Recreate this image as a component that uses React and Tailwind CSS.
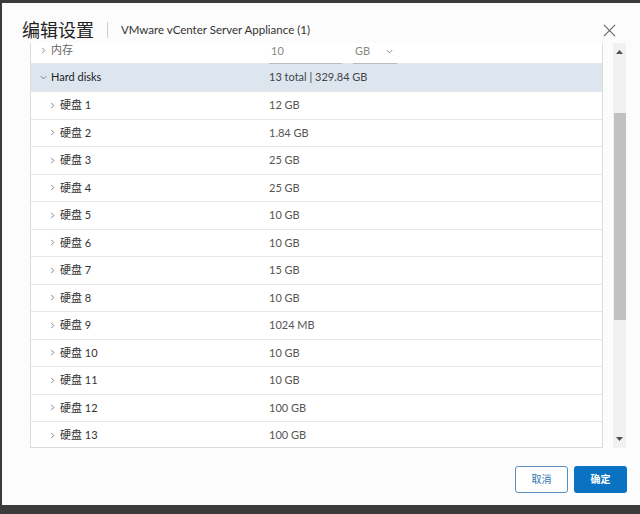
import React from "react";

const disks = [
  ["硬盘 1", "12 GB"],
  ["硬盘 2", "1.84 GB"],
  ["硬盘 3", "25 GB"],
  ["硬盘 4", "25 GB"],
  ["硬盘 5", "10 GB"],
  ["硬盘 6", "10 GB"],
  ["硬盘 7", "15 GB"],
  ["硬盘 8", "10 GB"],
  ["硬盘 9", "1024 MB"],
  ["硬盘 10", "10 GB"],
  ["硬盘 11", "10 GB"],
  ["硬盘 12", "100 GB"],
  ["硬盘 13", "100 GB"],
];

const font = { fontFamily: '"Lato", "Noto Sans CJK SC", sans-serif' };

function Chevron({ down }) {
  return (
    <svg width="7" height="7" viewBox="0 0 8 8" className="text-gray-500">
      {down ? (
        <path d="M1 2.5 L4 5.5 L7 2.5" fill="none" stroke="currentColor" strokeWidth="1" />
      ) : (
        <path d="M2.5 1 L5.5 4 L2.5 7" fill="none" stroke="currentColor" strokeWidth="1" />
      )}
    </svg>
  );
}

function Row({ label, value }) {
  return (
    <div className="flex items-center h-[27.5px] border-b border-[#e6e6e6] bg-white">
      <div className="w-[238px] flex items-center pl-[18px] gap-[4px] text-[11px] text-[#333]">
        <Chevron />
        <span>{label}</span>
      </div>
      <div className="text-[11px] text-[#555]">{value}</div>
    </div>
  );
}

export default function App() {
  return (
    <div className="w-[640px] h-[514px] bg-[#3b3b3b] pt-[3px] pl-[2px] pb-[9px]" style={font}>
      <div className="h-full bg-[#fcfcfc] flex flex-col">
        <div className="flex items-center h-[40px] pt-[14px] pl-[20px] pr-[24px]">
          <span className="text-[18px] text-[#222] leading-none">编辑设置</span>
          <div className="w-px h-[16px] bg-[#ccc] ml-[13px] mr-[13px]" />
          <span className="text-[11.5px] text-[#333]">VMware vCenter Server Appliance (1)</span>
          <div className="flex-1" />
          <svg width="13" height="13" viewBox="0 0 14 14" className="text-[#666]">
            <path d="M1 1 L13 13 M13 1 L1 13" stroke="currentColor" strokeWidth="1.2" />
          </svg>
        </div>
        <div className="flex pl-[28px] pr-[14px]">
          <div className="w-[573px] h-[405px] overflow-hidden border-x border-b border-[#dcdcdc]">
            <div className="-mt-[5px]">
              <div className="flex items-center h-[26px] border-b border-[#e6e6e6] bg-white">
                <div className="w-[238px] flex items-center pl-[9px] gap-[4px] text-[11px] text-[#666]">
                  <Chevron />
                  <span>内存</span>
                </div>
                <div className="w-[73px] border-b border-[#bbb] text-[11px] text-[#888] pl-[2px] pb-[3px] pt-[6px]">10</div>
                <div className="ml-[11px] w-[44px] border-b border-[#bbb] text-[11px] text-[#888] pl-[2px] pb-[3px] pt-[6px] flex items-center gap-[16px]">
                  <span>GB</span>
                  <Chevron down />
                </div>
              </div>
              <div className="flex items-center h-[28px] border-b border-[#e6e6e6] bg-[#dde6ef]">
                <div className="w-[238px] flex items-center pl-[9px] gap-[4px] text-[11px] text-[#222]">
                  <Chevron down />
                  <span>Hard disks</span>
                </div>
                <div className="text-[11px] text-[#444]">13 total | 329.84 GB</div>
              </div>
              {disks.map(([l, v]) => (
                <Row key={l} label={l} value={v} />
              ))}
            </div>
          </div>
          <div className="ml-[10px] w-[13px] h-[405px] bg-[#f1f1f1] flex flex-col items-center">
            <svg width="7" height="5" viewBox="0 0 7 5" className="mt-[6px]">
              <path d="M0 5 L3.5 1 L7 5 Z" fill="#505050" />
            </svg>
            <div className="w-[12px] h-[207px] bg-[#c1c1c1] mt-[59px]" />
            <div className="flex-1" />
            <svg width="7" height="5" viewBox="0 0 7 5" className="mb-[6px]">
              <path d="M0 0 L3.5 4 L7 0 Z" fill="#505050" />
            </svg>
          </div>
        </div>
        <div className="flex justify-end gap-[6px] pr-[13px] mt-[18px]">
          <button className="w-[53px] h-[27px] rounded-[3px] border border-[#5a8fbf] bg-white text-[#2f74b5] text-[10px]">
            取消
          </button>
          <button className="w-[53px] h-[27px] rounded-[3px] bg-[#0a72c2] text-white text-[10px] font-bold">
            确定
          </button>
        </div>
      </div>
    </div>
  );
}
